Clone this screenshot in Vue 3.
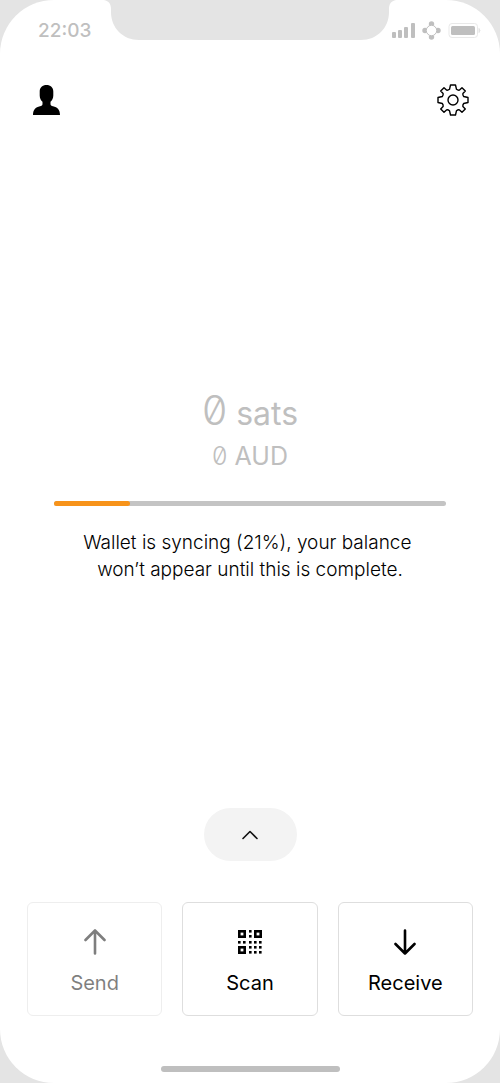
<script setup>
import { ref } from 'vue'

const progress = ref(21)

const dots = [
  [11, 0], [11, 5], [0, 11], [5, 11], [11, 11], [16, 11], [21, 11],
  [11, 16], [16, 16], [21, 16], [11, 21], [16, 21], [21, 21],
]
</script>

<template>
  <div class="page">
    <main class="phone">
      <svg class="notch" viewBox="0 0 292 40" aria-hidden="true">
        <path d="M0 0C5 1 7 4 7 9V12C7 28 19 40 35 40H257C273 40 285 28 285 12V9C285 4 287 1 292 0Z" fill="#e4e4e4" />
      </svg>
      <div class="status">
        <time class="clock">22:03</time>
        <svg class="indicators" viewBox="0 0 90 20" aria-hidden="true">
          <g fill="#bfbfbf">
            <rect x="1" y="12" width="4" height="6" rx="1" />
            <rect x="7" y="10" width="4" height="8" rx="1" />
            <rect x="13" y="7" width="4" height="11" rx="1" />
            <rect x="20" y="3" width="4" height="15" rx="1" />
            <circle cx="40.500" cy="4" r="2.700" />
            <circle cx="34" cy="10.500" r="2.700" />
            <circle cx="47" cy="10.500" r="2.700" />
            <circle cx="40.500" cy="17" r="2.700" />
            <rect x="60" y="6" width="24" height="9" rx="1.500" />
          </g>
          <circle cx="40.500" cy="10.500" r="5.200" fill="#fff" stroke="#bfbfbf" />
          <rect x="58" y="3.500" width="28.500" height="14" rx="3" fill="none" stroke="#e9e9e9" />
          <path d="M88 8.500Q90 10.500 88 12.500Z" fill="#e4e4e4" stroke="#e4e4e4" />
        </svg>
      </div>

      <header class="topbar">
        <button class="icon-button" type="button" aria-label="Profile">
          <svg width="28" height="32" viewBox="0 0 28 32">
            <path d="M13.500 1C9.500 1 6.700 3.500 6.700 7.500V11.500C6.700 14.500 8 16.500 9.500 17.700V20C9.500 21.500 8.500 22 7 22.300C2.500 23.300 0 26 0 31H27C27 26 24.500 23.300 20 22.300C18.500 22 17.500 21.500 17.500 20V17.700C19 16.500 20.300 14.500 20.300 11.500V7.500C20.300 3.500 17.500 1 13.500 1Z" />
          </svg>
        </button>
        <button class="icon-button" type="button" aria-label="Settings">
          <svg width="32" height="32" viewBox="-16 -16 32 32" fill="none" stroke="#000" stroke-width="1.400" stroke-linejoin="round">
            <path d="M-2.500 -15H2.500L3.500 -10.700Q5 -9.500 6.500 -9.900L9 -12.300L12.300 -9L9.900 -6.500Q9.500 -5 10.700 -3.500L15 -2.500V2.500L10.700 3.500Q9.500 5 9.900 6.500L12.300 9L9 12.300L6.500 9.900Q5 9.500 3.500 10.700L2.500 15H-2.500L-3.500 10.700Q-5 9.500 -6.500 9.900L-9 12.300L-12.300 9L-9.900 6.500Q-9.500 5 -10.700 3.500L-15 2.500V-2.500L-10.700 -3.500Q-9.500 -5 -9.900 -6.500L-12.300 -9L-9 -12.300L-6.500 -9.900Q-5 -9.500 -3.500 -10.700Z" />
            <circle r="5" />
          </svg>
        </button>
      </header>

      <section class="balance">
        <p class="sats"><span class="amount">0</span> sats</p>
        <p class="fiat"><span class="digit">0</span> AUD</p>
        <div class="track" role="progressbar" aria-label="Wallet sync" aria-valuemin="0" aria-valuemax="100" :aria-valuenow="progress">
          <div class="fill" :style="{ width: progress - 1.500 + '%' }"></div>
        </div>
        <p class="message">Wallet is syncing ({{ progress }}%), your balance&nbsp;<br>won’t appear until this is complete.</p>
      </section>

      <button class="expand" type="button" aria-label="Show activity">
        <svg width="18" height="10" viewBox="0 0 18 10" fill="none" stroke="#111" stroke-width="1.600" stroke-linecap="round" stroke-linejoin="round">
          <path d="M2 8.500L9 1.500L16 8.500" />
        </svg>
      </button>

      <nav class="actions" aria-label="Wallet actions">
        <button class="action" type="button" disabled>
          <svg width="26" height="26" viewBox="0 0 26 26" fill="none" stroke="#000" stroke-width="2.600" stroke-linecap="round" stroke-linejoin="round">
            <path d="M13 24.500V1.500M3.500 11L13 1.500L22.500 11" />
          </svg>
          <span>Send</span>
        </button>
        <button class="action" type="button">
          <svg width="26" height="26" viewBox="-1 -1 26 26">
            <g fill="none" stroke="#000" stroke-width="2.600">
              <rect x="1.300" y="1.300" width="5.400" height="5.400" />
              <rect x="17.300" y="1.300" width="5.400" height="5.400" />
              <rect x="1.300" y="17.300" width="5.400" height="5.400" />
            </g>
            <rect v-for="([x, y], i) in dots" :key="i" :x="x" :y="y" width="2.600" height="2.600" />
          </svg>
          <span>Scan</span>
        </button>
        <button class="action" type="button">
          <svg width="26" height="26" viewBox="0 0 26 26" fill="none" stroke="#000" stroke-width="2.600" stroke-linecap="round" stroke-linejoin="round">
            <path d="M13 1.500V24.500M3.500 15L13 24.500L22.500 15" />
          </svg>
          <span>Receive</span>
        </button>
      </nav>
      <div class="home-bar"></div>
    </main>
  </div>
</template>

<style>
body {
  margin: 0;
}
</style>

<style scoped>
.page {
  background: #e4e4e4;
  font-family: Inter, "Liberation Sans", sans-serif;
  color: #000;
}
.phone {
  position: relative;
  box-sizing: border-box;
  display: flex;
  flex-direction: column;
  min-height: 100vh;
  padding: 16px 27px 11px;
  border-radius: 54px;
  background: #fff;
}
.notch {
  position: absolute;
  top: 0;
  left: 50%;
  width: 292px;
  height: 40px;
  transform: translateX(-50%);
}
.status {
  display: flex;
  justify-content: space-between;
  align-items: center;
  height: 28px;
  margin: 0 -8px 0 11px;
}
.clock {
  font-size: 19px;
  font-weight: 500;
  color: #bfbfbf;
}
.indicators {
  width: 90px;
  height: 20px;
}
.topbar {
  display: flex;
  justify-content: space-between;
  margin: 40px 4px 0 6px;
}
.icon-button {
  display: flex;
  padding: 0;
  border: 0;
  background: none;
}
.balance {
  display: flex;
  flex-direction: column;
  align-items: center;
  margin: auto 27px;
  padding-top: 46px;
  text-align: center;
}
p {
  margin: 0;
}
.sats,
.fiat {
  color: #bfbfbf;
}
.sats {
  font-size: 32px;
  line-height: 46px;
}
.amount,
.digit {
  font-weight: 300;
  font-feature-settings: "zero";
}
.amount {
  font-size: 41px;
}
.fiat {
  font-size: 25px;
  line-height: 38px;
}
.track {
  width: 100%;
  height: 5px;
  margin: 26px 0 23px;
  border-radius: 3px;
  background: #c4c4c4;
}
.fill {
  height: 100%;
  border-radius: 3px;
  background: #f7931a;
}
.message {
  font-size: 19px;
  font-weight: 300;
  line-height: 27px;
}
.expand {
  display: flex;
  align-items: center;
  justify-content: center;
  align-self: center;
  width: 93px;
  height: 53px;
  padding: 0;
  border: 0;
  border-radius: 27px;
  background: #f3f3f3;
}
.actions {
  display: grid;
  grid-template-columns: repeat(3, 1fr);
  gap: 20px;
  margin-top: 41px;
}
.action {
  display: flex;
  flex-direction: column;
  align-items: center;
  justify-content: center;
  gap: 14px;
  height: 114px;
  padding: 8px 0 0;
  border: 1px solid #dedede;
  border-radius: 6px;
  background: #fff;
  color: #000;
  font: inherit;
  font-size: 20px;
  line-height: 28px;
}
.action:disabled {
  opacity: 0.5;
}
.home-bar {
  align-self: center;
  width: 179px;
  height: 6px;
  margin-top: 50px;
  border-radius: 3px;
  background: #bfbfbf;
}
</style>
